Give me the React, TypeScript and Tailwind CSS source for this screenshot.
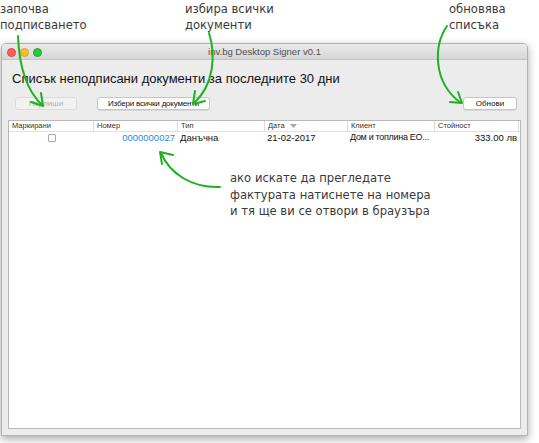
import React from 'react';

const cols = [
  { key: 'mark', label: 'Маркирани', w: 'w-[85px]' },
  { key: 'num', label: 'Номер', w: 'w-[84px]' },
  { key: 'type', label: 'Тип', w: 'w-[87px]' },
  { key: 'date', label: 'Дата', w: 'w-[83px]' },
  { key: 'client', label: 'Клиент', w: 'w-[87px]' },
  { key: 'sum', label: 'Стойност', w: 'w-[84px]' },
];

function Arrows() {
  return (
    <svg className="absolute inset-0 pointer-events-none" width="539" height="443" viewBox="0 0 539 443" fill="none">
      <g stroke="#1fb21f" strokeWidth="2" strokeLinecap="round" strokeLinejoin="round">
        {/* започва подписването */}
        <path d="M18 36 C 19 62, 24 88, 42 105" />
        <path d="M41 93 L43 106 L31 102" />
        {/* избира всички документи */}
        <path d="M209 33 C 216 55, 214 85, 194 103" />
        <path d="M195 91 L193 104 L205 101" />
        {/* обновява списъка */}
        <path d="M447 26 C 434 45, 432 82, 461 103" />
        <path d="M458 92 L462 103 L450 102" />
        {/* номер */}
        <path d="M220 187 C 192 188, 170 174, 161 153" />
        <path d="M173 155 L160 152 L162 164" />
      </g>
    </svg>
  );
}

export default function App() {
  return (
    <div className="relative w-[539px] h-[443px] overflow-hidden bg-white font-['Liberation_Sans',Arial,sans-serif]">
      {/* annotations */}
      <div className="absolute left-0 top-[1px] text-[11.6px] leading-[16px] text-[#3a3a3a] font-['DejaVu_Sans',Verdana,sans-serif]">
        <div>започва</div>
        <div>подписването</div>
      </div>
      <div className="absolute left-[185px] top-[1px] text-[11.6px] leading-[16px] text-[#3a3a3a] font-['DejaVu_Sans',Verdana,sans-serif]">
        <div>избира всички</div>
        <div>документи</div>
      </div>
      <div className="absolute left-[449px] top-[1px] text-[11.6px] leading-[16px] text-[#3a3a3a] font-['DejaVu_Sans',Verdana,sans-serif]">
        <div>обновява</div>
        <div>списъка</div>
      </div>

      <div className="pt-[43px] pl-[1px]">
        <div className="w-[527px] h-[393px] flex flex-col rounded-t-[5px] border border-[#b3b3b3] bg-[#ececec] shadow-[0_3px_8px_rgba(0,0,0,0.35)]">
          {/* title bar */}
          <div className="relative h-[16px] shrink-0 flex items-center justify-center rounded-t-[4px] border-b border-[#c4c4c4] bg-gradient-to-b from-[#ebebeb] to-[#d6d6d6]">
            <div className="absolute left-[5px] top-[4px] flex gap-[4px]">
              <span className="w-[9px] h-[9px] rounded-full bg-[#fc5f57] border border-[#e0443e]" />
              <span className="w-[9px] h-[9px] rounded-full bg-[#fdbc2e] border border-[#dea123]" />
              <span className="w-[9px] h-[9px] rounded-full bg-[#28c840] border border-[#1aab29]" />
            </div>
            <span className="text-[9.5px] text-[#4f4f4f] leading-none">inv.bg Desktop Signer v0.1</span>
          </div>

          <div className="flex-1 flex flex-col px-[6px] pb-[6px]">
            <h1 className="mt-[10px] ml-[4px] text-[13px] leading-[17px] text-[#111]">
              Списък неподписани документи за последните 30 дни
            </h1>

            <div className="mt-[10px] ml-[7px] flex items-center">
              <button className="w-[62px] h-[13px] rounded-[3px] border border-[#dcdcdc] bg-[#f2f2f2] text-[8px] leading-none text-[#b0b0b0]">
                Подпиши
              </button>
              <button className="ml-[20px] w-[113px] h-[13px] rounded-[3px] border border-[#c6c6c6] bg-white text-[8px] tracking-[-0.2px] leading-none text-[#111] shadow-[0_1px_0_rgba(0,0,0,0.08)] whitespace-nowrap">
                Избери всички документи
              </button>
              <button className="ml-auto mr-[4px] w-[54px] h-[13px] rounded-[3px] border border-[#c6c6c6] bg-white text-[8px] leading-none text-[#111] shadow-[0_1px_0_rgba(0,0,0,0.08)]">
                Обнови
              </button>
            </div>

            <div className="mt-[10px] flex-1 border border-[#b8b8b8] bg-white">
              <div className="flex h-[11px] border-b border-[#e2e2e2]">
                {cols.map(c => (
                  <div
                    key={c.key}
                    className={`${c.w} flex items-center pl-[3px] text-[7.5px] leading-none text-[#333] border-r border-[#dcdcdc]`}
                  >
                    {c.label}
                    {c.key === 'date' && (
                      <svg className="ml-[5px]" width="7" height="4" viewBox="0 0 7 4">
                        <path d="M0 0 L7 0 L3.5 4 Z" fill="#a8a8a8" />
                      </svg>
                    )}
                  </div>
                ))}
              </div>
              <div className="flex h-[11px] items-center text-[9.5px] leading-none text-[#111] whitespace-nowrap">
                <div className="w-[85px] flex justify-center">
                  <span className="w-[8px] h-[8px] rounded-[1px] border border-[#aaa] bg-white" />
                </div>
                <div className="w-[84px] text-right pr-[3px] text-[#2a8ae0]">0000000027</div>
                <div className="w-[87px] pl-[2px]">Данъчна</div>
                <div className="w-[83px] pl-[2px]">21-02-2017</div>
                <div className="w-[87px] pl-[2px] text-[9px] tracking-[-0.3px]">Дом и топлина ЕО...</div>
                <div className="w-[84px] text-right pr-[2px]">333.00 лв</div>
              </div>
            </div>
          </div>
        </div>
      </div>

      <div className="absolute left-[230px] top-[170px] text-[11.6px] leading-[16.5px] text-[#3a3a3a] font-['DejaVu_Sans',Verdana,sans-serif]">
        <div>ако искате да прегледате</div>
        <div>фактурата натиснете на номера</div>
        <div>и тя ще ви се отвори в браузъра</div>
      </div>

      <Arrows />
    </div>
  );
}
